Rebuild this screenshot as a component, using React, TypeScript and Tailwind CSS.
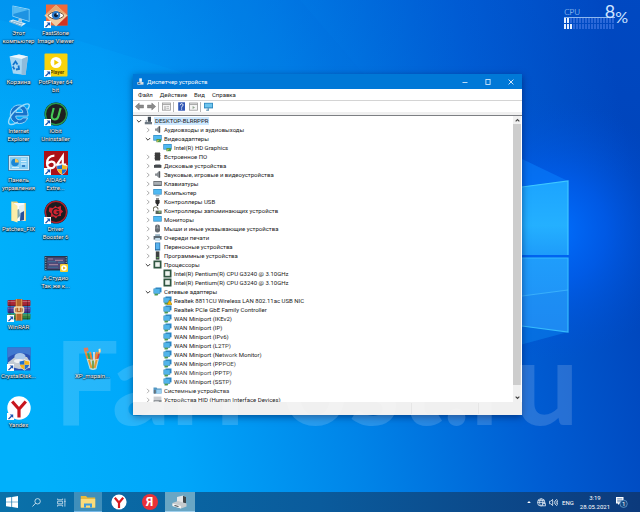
import type { ReactNode } from 'react';

const UI_FONT = "font-['Roboto','Noto_Sans',sans-serif]";

/* ---------- Wallpaper ---------- */

function Wallpaper() {
  return (
    <svg className="absolute inset-0 h-full w-full" viewBox="0 0 640 512" preserveAspectRatio="none" aria-hidden="true">
      <defs>
        <linearGradient id="sky" x1="0" y1="0.55" x2="1" y2="0.4">
          <stop offset="0" stopColor="#00b0fb" />
          <stop offset="0.22" stopColor="#00a6fa" />
          <stop offset="0.5" stopColor="#0084e8" />
          <stop offset="0.78" stopColor="#005cd2" />
          <stop offset="1" stopColor="#0044bb" />
        </linearGradient>
        <linearGradient id="topShade" x1="0" y1="0" x2="0" y2="1">
          <stop offset="0" stopColor="#0058d8" stopOpacity="0.22" />
          <stop offset="0.35" stopColor="#0058d8" stopOpacity="0" />
        </linearGradient>
        <radialGradient id="glow" cx="555" cy="230" r="130" gradientUnits="userSpaceOnUse">
          <stop offset="0" stopColor="#0070ff" stopOpacity="0.95" />
          <stop offset="0.4" stopColor="#0062fa" stopOpacity="0.6" />
          <stop offset="1" stopColor="#0050d8" stopOpacity="0" />
        </radialGradient>
        <linearGradient id="paneTop" x1="0" y1="0" x2="0" y2="1">
          <stop offset="0" stopColor="#1ca4ff" />
          <stop offset="0.6" stopColor="#24b0ff" />
          <stop offset="1" stopColor="#1e9cfa" />
        </linearGradient>
        <linearGradient id="paneBottom" x1="0" y1="0" x2="0" y2="1">
          <stop offset="0" stopColor="#1f9dfb" />
          <stop offset="1" stopColor="#208ef4" />
        </linearGradient>
      </defs>
      <rect width="640" height="512" fill="url(#sky)" />
      <rect width="640" height="512" fill="url(#topShade)" />
      <path d="M70 38 L200 78 L420 140 L300 0 L0 0 L0 20 Z" fill="#0068d8" opacity="0.08" />
      <rect width="640" height="512" fill="url(#glow)" />
      <path d="M520 158 L568 181 L520 188 Z" fill="#0a84ff" opacity="0.5" />
      <path d="M520 345 L568 332 L520 326 Z" fill="#0a84ee" opacity="0.5" />
      <path d="M400 202 L568 181 V255 H400 Z" fill="url(#paneTop)" />
      <path d="M400 258 H568 V332 L400 311 Z" fill="url(#paneBottom)" />
      <path d="M400 311 L568 290 V332 Z" fill="#1a86f0" opacity="0.5" />
      <path d="M522 187 L568 181 V255" fill="none" stroke="#3fc8ff" strokeWidth="1.2" />
      <path d="M522 258 H568 V332 L522 326" fill="none" stroke="#36bbfc" strokeWidth="1.2" />
      <path d="M522 296 L568 290" stroke="#4cc4ff" strokeWidth="0.6" />
    </svg>
  );
}

/* ---------- Desktop icons ---------- */

function Shortcut() {
  return (
    <g>
      <rect x="0" y="17" width="7" height="7" fill="#fff" />
      <path d="M1 22.8 L4 19.8 L2.6 18.4 H6.2 V22 L4.9 20.7 L2 23.6 Z" fill="#1b56b0" />
    </g>
  );
}

function Shield({ x, y }: { x: number; y: number }) {
  return (
    <g transform={`translate(${x} ${y})`}>
      <path d="M5.5 0 C7 1.2 9 1.7 11 1.6 C11.2 6 9.5 9.5 5.5 11.5 C1.5 9.5 -0.2 6 0 1.6 C2 1.7 4 1.2 5.5 0 Z" fill="#e9e9e9" />
      <path d="M5.5 1 V5.8 H0.8 C0.6 4.5 0.6 3.4 0.7 2.4 C2.5 2.4 4 2 5.5 1 Z M5.5 5.8 H10.2 C9.6 8 8 9.7 5.5 10.8 Z" fill="#1f6fd0" />
      <path d="M5.5 1 C7 2 8.5 2.4 10.3 2.4 C10.4 3.4 10.4 4.5 10.2 5.8 H5.5 Z M5.5 5.8 V10.8 C3 9.7 1.4 8 0.8 5.8 Z" fill="#f5b51c" />
    </g>
  );
}

const desktopArt: Record<string, ReactNode> = {
  pc: (
    <>
      <path d="M5.5 1.5 L22.5 5 V18 L5.5 12.6 Z" fill="#9fdcfa" />
      <path d="M6.2 2.4 L21.8 5.8 V17 L6.2 12 Z" fill="#1e93e2" />
      <path d="M6.2 2.4 L21.8 5.8 L6.2 10 Z" fill="#54baf3" />
      <path d="M12 14.4 L15 15.3 V18 L11 16.8 Z" fill="#a9c8dc" />
      <path d="M2 17 L6 15.5 L19 19.5 L15 22 Z" fill="#dff0fa" />
      <path d="M2 17 L15 22 V23 L2 18.1 Z" fill="#8db7d0" />
      <path d="M4.5 17.2 L6.5 16.4 L16 19.4 L14.5 20.7 Z" fill="#8fbcd8" />
    </>
  ),
  bin: (
    <>
      <path d="M2.5 3.5 L12 1.5 L21 3.5 L18.5 22 L6 20.5 Z" fill="#b9dcf2" opacity="0.9" />
      <path d="M2.5 3.5 L12 1.5 L21 3.5 L15 6 Z" fill="#eef7fd" />
      <path d="M15 6 L21 3.5 L18.5 22 L14.5 22 Z" fill="#8fbbda" />
      <path d="M6 12 L8.5 8.5 L10.5 11.5 M11.5 12.5 L12 16 L9 16.5 M7.5 16.4 L5.8 13.5" stroke="#1475cc" strokeWidth="1.8" fill="none" />
    </>
  ),
  ie: (
    <>
      <path d="M12.2 3 C17.8 3 21.1 7.2 21 14 H8.7 C8.9 16.3 10.2 17.8 12.4 17.8 C14 17.8 15.1 17 15.7 15.9 H20.6 C19.4 19.6 16.2 21.6 12.4 21.6 C6.8 21.6 3.3 17.8 3.3 12.3 C3.3 6.9 7 3 12.2 3 Z M8.8 10.5 H15.8 C15.6 8.2 14.4 6.8 12.3 6.8 C10.3 6.8 9 8.2 8.8 10.5 Z" fill="#1673cc" stroke="#b8e6fc" strokeWidth="0.8" />
      <path d="M20.5 7.5 C23.8 2.5 22.5 0.5 16.5 3 C9 6.4 2.5 14 1.6 19.5 C1.2 23.6 5.6 23.4 11 20" fill="none" stroke="#9adcfa" strokeWidth="1.4" />
    </>
  ),
  control: (
    <>
      <rect x="1.5" y="4.5" width="21" height="15" fill="#cdeafa" stroke="#2f6f9c" strokeWidth="0.8" />
      <rect x="3" y="6" width="18" height="12" fill="#84cdf4" />
      <circle cx="8" cy="11.5" r="3.8" fill="#1a87d6" />
      <path d="M8 11.5 V7.7 A3.8 3.8 0 0 1 11.8 11.5 Z" fill="#f3c55a" />
      <path d="M14 8 H19.5 M14 10.5 H19.5 M14 13 H19.5 M5 16.6 H12" stroke="#e4f5fd" strokeWidth="0.9" />
      <path d="M15 15 H18" stroke="#1565b5" strokeWidth="1.5" />
    </>
  ),
  folder: (
    <>
      <path d="M4.5 1.5 H10 L11.5 3 H19 V21 H4.5 Z" fill="#e6cf77" />
      <path d="M7 3 H17.5 V21 H7 Z" fill="#f8fbff" />
      <path d="M12 6 L17 4.5 V21 H12 Z" fill="#dff0f6" />
      <path d="M13.5 13 L17 11 V20 L13 21 Z" fill="#234f9c" />
      <path d="M9.5 10 L12 9 L13 16 L10 19 Z" fill="#7fa6ae" />
      <path d="M4.5 1.5 L10.5 6 V22.5 L4.5 20.5 Z" fill="#fbeda8" />
    </>
  ),
  winrar: (
    <>
      <rect x="0.5" y="2" width="23" height="6.2" rx="1" fill="#a8283a" />
      <rect x="0.5" y="8.7" width="23" height="6.2" rx="1" fill="#4f3c98" />
      <rect x="0.5" y="15.4" width="23" height="6.2" rx="1" fill="#2f8444" />
      <path d="M1 3.5 H23 M1 10.2 H23 M1 17 H23" stroke="#fff" strokeOpacity="0.35" strokeWidth="0.8" />
      <path d="M1 7.4 H23 M1 14.2 H23 M1 20.8 H23" stroke="#000" strokeOpacity="0.3" strokeWidth="1" />
      <path d="M3 2 V21.6 M20.5 2 V21.6" stroke="#000" strokeOpacity="0.25" strokeWidth="1" />
      <rect x="8.5" y="1" width="7" height="21.6" fill="#b5642a" />
      <path d="M9.5 1 V22.6 M14.5 1 V22.6" stroke="#e8a55b" strokeWidth="0.7" />
      <rect x="7.5" y="9" width="9" height="6" rx="2" fill="none" stroke="#f0dcae" strokeWidth="1.6" />
      <path d="M12 9 V13" stroke="#f0dcae" strokeWidth="1.4" />
      <Shortcut />
    </>
  ),
  crystal: (
    <>
      <rect x="0.5" y="0.5" width="23" height="23" fill="#2a52b4" />
      <path d="M0.5 0.5 H23.5 V9 C16 4 8 6 0.5 11 Z" fill="#3f78d0" />
      <path d="M1 15.5 L8 10 L20 10 L23 15 V21 L12 22 L1 19 Z" fill="#c3ccd4" />
      <ellipse cx="13" cy="9.5" rx="5.5" ry="3.4" fill="#a9c7ea" />
      <ellipse cx="12" cy="14" rx="5" ry="2" fill="#eef2f5" />
      <Shield x={12} y={12} />
      <Shortcut />
    </>
  ),
  yandex: (
    <>
      <circle cx="12" cy="12" r="11.7" fill="#fff" />
      <path d="M5.2 5.5 L12 13.2 L18.8 5.5 M12 12.5 V21.5" stroke="#c8161d" strokeWidth="3.2" fill="none" />
      <Shortcut />
    </>
  ),
  faststone: (
    <>
      <rect x="2" y="0.5" width="21.5" height="21" fill="#ef6a3a" />
      <path d="M12.5 12 H23.5 V21.5 H12.5 Z" fill="#d33321" />
      <path d="M0.5 11.5 L12 1 L23.5 11.5 L12 22.5 Z" fill="#f3cda2" />
      <path d="M0.5 11.5 L12 1 L23.5 11.5 L12 6 Z" fill="#e7a873" />
      <path d="M4 11.5 C7.5 6.8 16.5 6.8 20 11.5 C16.5 16.2 7.5 16.2 4 11.5 Z" fill="#fff" stroke="#5c3924" strokeWidth="0.9" />
      <circle cx="12" cy="11.2" r="4.2" fill="#2c7ac8" />
      <circle cx="12" cy="11.2" r="2" fill="#0b1c33" />
      <circle cx="13.4" cy="9.9" r="0.9" fill="#fff" />
      <Shortcut />
    </>
  ),
  potplayer: (
    <>
      <rect x="0.5" y="0.5" width="23" height="23" rx="1" fill="#f8d30c" />
      <circle cx="12" cy="9.5" r="5.5" fill="#fff" />
      <path d="M10.3 6.8 L14.8 9.5 L10.3 12.2 Z" fill="#f2c800" />
      <text x="6" y="21" fontSize="5" fontWeight="700" fill="#5a4700">Player</text>
      <Shortcut />
    </>
  ),
  iobit: (
    <>
      <circle cx="12" cy="12" r="11.5" fill="#1f2022" />
      <circle cx="12" cy="12" r="10.6" fill="none" stroke="#279a4c" strokeWidth="1.4" />
      <path d="M9.7 6 L7.8 13.6 C7.1 18.6 13.2 18.9 14.4 14.3 L16.6 6" fill="none" stroke="#46c856" strokeWidth="2.1" />
      <Shortcut />
    </>
  ),
  aida: (
    <>
      <rect x="0" y="0" width="24" height="24" fill="#ac1218" />
      <path d="M10.4 4.6 C5.5 4.6 3 8 3 12.2 C3 18.5 10.8 18.3 10.8 13.8 C10.8 10 5.5 9.6 3.6 13" fill="none" stroke="#fff" strokeWidth="2.2" />
      <path d="M18.8 18 V5 L13 13.6 H22.2" fill="none" stroke="#fff" strokeWidth="2.2" />
      <Shield x={12.5} y={12.5} />
      <Shortcut />
    </>
  ),
  booster: (
    <>
      <circle cx="12" cy="12" r="11.5" fill="#1c1c20" />
      <circle cx="12" cy="12" r="10.6" fill="none" stroke="#b0202c" strokeWidth="1.3" />
      <path d="M5.4 7.6 L9 8 L11.5 5.8 L13 7.5 L17 5.8 L17 9.4 L19.2 11.5 L17 13.5 L17 16 L13.7 16.2 L12 18.4 L9.7 16.6 L6.6 17 L7.2 13.5 L4.8 11.2 Z" fill="#cf2431" />
      <path d="M14.6 9.8 A3.3 3.3 0 1 0 15 13.2 M12.5 12 H15.3" fill="none" stroke="#1c1c20" strokeWidth="1.3" />
      <Shortcut />
    </>
  ),
  video: (
    <>
      <rect x="0.5" y="7" width="23" height="14.5" fill="#27344c" />
      <rect x="3.2" y="8.4" width="17.6" height="11.6" fill="#4d4a78" />
      <path d="M4 10 H9 M11 11.4 H19 M5 15.6 H14" stroke="#9c7f9b" strokeWidth="1.1" />
      <path d="M3.5 12.8 H12 M14 13.4 H20 M4 18.2 H14" stroke="#3b6f96" strokeWidth="1.1" />
      <path d="M1.8 8 V21 M22.2 8 V15" stroke="#9db6c8" strokeWidth="1" strokeDasharray="1.2 1.2" />
      <rect x="16" y="15" width="8" height="8" rx="1" fill="#f6cf31" />
      <circle cx="20" cy="19" r="2.8" fill="#fff" />
      <path d="M19.2 17.5 L21.6 19 L19.2 20.5 Z" fill="#dba800" />
    </>
  ),
  paint: (
    <>
      <path d="M7 13 L4 3 M11 14 L9 5 M13 14 L16 5 M15 14 L19 3" stroke="#e98430" strokeWidth="2" />
      <path d="M9 14 L7 6" stroke="#39a64b" strokeWidth="1.8" />
      <path d="M13 15 L13 5" stroke="#d9d9e4" strokeWidth="1.8" />
      <path d="M16 14 L18 7" stroke="#d73d3d" strokeWidth="1.6" />
      <path d="M2.5 1 L7 0.6 L7.6 4 L3.8 4.8 Z" fill="#e0663a" />
      <path d="M17.5 2 L19.5 1.5 L19.5 5.5 L18 5.5 Z" fill="#f5e4a7" />
      <path d="M5.5 11.5 C9 13 14 13 18 11.5 L15.5 22 C13.5 23.4 10.5 23.4 8.6 22 Z" fill="#dfe5d8" opacity="0.85" />
      <path d="M8 13 L10.5 21 M15.6 13 L13.6 21" stroke="#e49c32" strokeWidth="2" />
      <path d="M12 13.5 V21.5" stroke="#6b9d48" strokeWidth="1.8" />
    </>
  ),
};

type DesktopItem = { art: string; lines: string[]; place: string };

const desktopItems: DesktopItem[] = [
  { art: 'pc', lines: ['Этот', 'компьютер'], place: 'col-start-1 row-start-1' },
  { art: 'bin', lines: ['Корзина'], place: 'col-start-1 row-start-2' },
  { art: 'ie', lines: ['Internet', 'Explorer'], place: 'col-start-1 row-start-3' },
  { art: 'control', lines: ['Панель', 'управления'], place: 'col-start-1 row-start-4' },
  { art: 'folder', lines: ['Patches_FIX'], place: 'col-start-1 row-start-5' },
  { art: 'winrar', lines: ['WinRAR'], place: 'col-start-1 row-start-7' },
  { art: 'crystal', lines: ['CrystalDisk...'], place: 'col-start-1 row-start-8' },
  { art: 'yandex', lines: ['Yandex'], place: 'col-start-1 row-start-9' },
  { art: 'faststone', lines: ['FastStone', 'Image Viewer'], place: 'col-start-2 row-start-1' },
  { art: 'potplayer', lines: ['PotPlayer 64', 'bit'], place: 'col-start-2 row-start-2' },
  { art: 'iobit', lines: ['IObit', 'Uninstaller'], place: 'col-start-2 row-start-3' },
  { art: 'aida', lines: ['AIDA64', 'Extre...'], place: 'col-start-2 row-start-4' },
  { art: 'booster', lines: ['Driver', 'Booster 6'], place: 'col-start-2 row-start-5' },
  { art: 'video', lines: ['А-Студио', 'Так же к...'], place: 'col-start-2 row-start-6' },
  { art: 'paint', lines: ['XP_mspain...'], place: 'col-start-3 row-start-8' },
];

function DesktopIcons() {
  return (
    <div className="grid grid-cols-[repeat(3,37px)] grid-rows-[repeat(9,49px)]">
      {desktopItems.map((item) => (
        <button key={item.art} type="button" className={`flex flex-col items-center pt-1 ${item.place}`}>
          <svg className="size-6 shrink-0" viewBox="0 0 24 24" aria-hidden="true">
            {desktopArt[item.art]}
          </svg>
          <span className="mt-px flex flex-col text-[6px] leading-[8px] whitespace-nowrap text-white [text-shadow:0_1px_1px_#000,0_0_1px_#00203f,0_0_2px_#00203f]">
            {item.lines.map((line) => (
              <span key={line}>{line}</span>
            ))}
          </span>
        </button>
      ))}
    </div>
  );
}

/* ---------- CPU gadget ---------- */

function CpuMeter({ active }: { active: number }) {
  return (
    <div className="flex h-[5px] gap-px">
      {Array.from({ length: 17 }, (_, i) => (
        <span key={i} className={i < active ? 'w-0.5 bg-[#e4efff]' : 'w-0.5 bg-[#2b68d8]'} />
      ))}
    </div>
  );
}

function CpuGadget() {
  return (
    <div className="absolute top-0 right-3 flex font-['Lato',sans-serif] text-[#cfe4ff]">
      <div className="w-[51px]">
        <div className="flex h-[18px] items-end justify-between border-b border-[#8fb8ee]">
          <span className="text-[8px] leading-[9px] font-light">CPU</span>
          <span className="text-[18px] leading-[12px]">8</span>
        </div>
        <div className="flex flex-col gap-px">
          <CpuMeter active={2} />
          <CpuMeter active={3} />
        </div>
      </div>
      <span className="mt-2 text-[16px] leading-[18px]">%</span>
    </div>
  );
}

/* ---------- Device tree ---------- */

const Warning = () => <path d="M6.5 4 L9.2 8.7 H3.8 Z" fill="#f5b800" stroke="#7a5a00" strokeWidth="0.4" />;

const Speaker = () => (
  <>
    <path d="M2 3.5 H3.6 L6 1 V8 L3.6 5.7 H2 Z" fill="#8a8f94" />
    <path d="M6 1 V8 L7.2 7.5 V1.6 Z" fill="#55595d" />
  </>
);

const Chip = () => (
  <>
    <rect x="0.5" y="0.5" width="8" height="8" fill="#2f5540" />
    <rect x="2.2" y="2.2" width="4.6" height="4.6" fill="#eef3ee" />
  </>
);

const Network = () => (
  <>
    <rect x="2.5" y="0.5" width="6" height="4.8" fill="#2a86c8" />
    <rect x="0.8" y="1.8" width="6.2" height="4.8" fill="#52b5ea" stroke="#2f7fae" strokeWidth="0.5" />
    <path d="M1.5 6.8 H5.5 L4.5 8.6 H1.5 Z" fill="#4e9b52" />
  </>
);

const Screen = () => (
  <>
    <rect x="0.3" y="1" width="8.4" height="5.6" fill="#2d86bd" />
    <rect x="1" y="1.6" width="7" height="4.3" fill="#4fb9f2" />
  </>
);

const deviceArt: Record<string, ReactNode> = {
  root: (
    <>
      <rect x="3.8" y="0.8" width="3.2" height="5" fill="#3c4650" />
      <path d="M0.8 6 H8 V8.3 H0.8 Z" fill="#6b7680" />
      <path d="M1.5 4 H3 V6 H1.5 Z" fill="#9aa6b0" />
    </>
  ),
  speaker: <Speaker />,
  display: (
    <>
      <Screen />
      <path d="M3.4 5 H8 V8.2 H3.4 Z" fill="#4c9a4a" />
      <path d="M4.4 8.2 V6.4 H6" stroke="#e8c75a" strokeWidth="0.7" fill="none" />
    </>
  ),
  firmware: (
    <>
      <rect x="2" y="0.5" width="5" height="8" fill="#3b3b3b" />
      <path d="M1.5 1.5 V8 M7.5 1.5 V8" stroke="#777" strokeWidth="0.8" strokeDasharray="0.8 0.8" />
    </>
  ),
  disk: (
    <>
      <rect x="1" y="4" width="7.4" height="2.8" fill="#45494d" />
      <path d="M1.6 4 L2.6 3 H7 L8 4 Z" fill="#a2a6aa" />
    </>
  ),
  keyboard: (
    <>
      <rect x="0.4" y="2" width="8.4" height="5" fill="#62676c" />
      <rect x="1.1" y="2.8" width="7" height="3" fill="#a9aeb3" />
    </>
  ),
  computer: (
    <>
      <Screen />
      <path d="M2.5 7.8 H6.5" stroke="#67808f" strokeWidth="0.9" />
    </>
  ),
  usb: (
    <>
      <path d="M3 1 H6 V3 H3 Z" fill="#8b8b8b" />
      <path d="M2.4 3 H6.6 V6 L5.2 7.4 V9 H3.8 V7.4 L2.4 6 Z" fill="#2b2b2b" />
    </>
  ),
  storage: (
    <>
      <path d="M1 5 A2.4 2.4 0 1 1 5 3.5" fill="none" stroke="#6c6c5c" strokeWidth="1.1" />
      <rect x="2.6" y="4.6" width="6" height="3.4" fill="#58655a" />
      <rect x="5.6" y="5.2" width="2" height="1.4" fill="#8fc878" />
    </>
  ),
  monitor: <Screen />,
  mouse: (
    <>
      <rect x="2" y="0.4" width="5" height="8.2" rx="2.4" fill="#666c72" />
      <path d="M4.5 0.8 V4 M2.2 4 H6.8" stroke="#b5babf" strokeWidth="0.6" />
    </>
  ),
  printer: (
    <>
      <rect x="2.2" y="1.2" width="4.8" height="2" fill="#9ab4c4" />
      <rect x="0.6" y="3" width="8" height="3.6" fill="#5c6a74" />
      <rect x="2.2" y="5" width="4.8" height="3" fill="#c8e0ee" />
    </>
  ),
  portable: (
    <>
      <rect x="2" y="0.5" width="5.2" height="8" fill="#2a6ea6" />
      <rect x="2.7" y="1.2" width="3.8" height="6" fill="#58b2ee" />
    </>
  ),
  software: (
    <>
      <rect x="2.8" y="0.4" width="3.6" height="8.2" fill="#3d4142" />
      <rect x="3.6" y="6" width="2" height="1.2" fill="#69b35e" />
    </>
  ),
  chip: <Chip />,
  network: <Network />,
  networkWarning: (
    <>
      <Network />
      <Warning />
    </>
  ),
  system: (
    <>
      <path d="M0.5 1.5 H3.5 L4.3 2.5 H8.6 V7.6 H0.5 Z" fill="#3484b8" />
      <rect x="3.4" y="3.6" width="5" height="3.8" fill="#8cc9ef" />
      <rect x="0.9" y="4" width="1.8" height="3.6" fill="#4c5a64" />
    </>
  ),
  hid: (
    <>
      <rect x="0.6" y="1.6" width="7.8" height="3.4" fill="#c2c6ca" />
      <path d="M0.6 5 H8.6 V8 H0.6 Z" fill="#7b8085" />
      <path d="M1.4 6.4 H5.8" stroke="#e2e4e6" strokeWidth="0.8" />
    </>
  ),
};

type Device = { label: string; icon: string; open?: boolean; children?: { label: string; icon: string }[] };

const devices: Device[] = [
  { label: 'Аудиовходы и аудиовыходы', icon: 'speaker' },
  { label: 'Видеоадаптеры', icon: 'display', open: true, children: [{ label: 'Intel(R) HD Graphics', icon: 'display' }] },
  { label: 'Встроенное ПО', icon: 'firmware' },
  { label: 'Дисковые устройства', icon: 'disk' },
  { label: 'Звуковые, игровые и видеоустройства', icon: 'speaker' },
  { label: 'Клавиатуры', icon: 'keyboard' },
  { label: 'Компьютер', icon: 'computer' },
  { label: 'Контроллеры USB', icon: 'usb' },
  { label: 'Контроллеры запоминающих устройств', icon: 'storage' },
  { label: 'Мониторы', icon: 'monitor' },
  { label: 'Мыши и иные указывающие устройства', icon: 'mouse' },
  { label: 'Очереди печати', icon: 'printer' },
  { label: 'Переносные устройства', icon: 'portable' },
  { label: 'Программные устройства', icon: 'software' },
  {
    label: 'Процессоры',
    icon: 'chip',
    open: true,
    children: [
      { label: 'Intel(R) Pentium(R) CPU G3240 @ 3.10GHz', icon: 'chip' },
      { label: 'Intel(R) Pentium(R) CPU G3240 @ 3.10GHz', icon: 'chip' },
    ],
  },
  {
    label: 'Сетевые адаптеры',
    icon: 'network',
    open: true,
    children: [
      { label: 'Realtek 8811CU Wireless LAN 802.11ac USB NIC', icon: 'networkWarning' },
      { label: 'Realtek PCIe GbE Family Controller', icon: 'network' },
      { label: 'WAN Miniport (IKEv2)', icon: 'network' },
      { label: 'WAN Miniport (IP)', icon: 'network' },
      { label: 'WAN Miniport (IPv6)', icon: 'network' },
      { label: 'WAN Miniport (L2TP)', icon: 'network' },
      { label: 'WAN Miniport (Network Monitor)', icon: 'network' },
      { label: 'WAN Miniport (PPPOE)', icon: 'network' },
      { label: 'WAN Miniport (PPTP)', icon: 'network' },
      { label: 'WAN Miniport (SSTP)', icon: 'network' },
    ],
  },
  { label: 'Системные устройства', icon: 'system' },
  { label: 'Устройства HID (Human Interface Devices)', icon: 'hid' },
];

function Expander({ open }: { open?: boolean }) {
  return (
    <button type="button" aria-label={open ? 'Свернуть' : 'Развернуть'} className="flex w-1.5 justify-center">
      <svg className="size-1.5" viewBox="0 0 6 6" fill="none" aria-hidden="true">
        {open ? (
          <path d="M0.8 2 L3 4.2 L5.2 2" stroke="#404040" strokeWidth="1" />
        ) : (
          <path d="M2 0.8 L4.2 3 L2 5.2" stroke="#a0a0a0" strokeWidth="0.9" />
        )}
      </svg>
    </button>
  );
}

function Row({ label, icon, expander, selected }: { label: string; icon: string; expander?: ReactNode; selected?: boolean }) {
  return (
    <div className="flex h-[9px] items-center">
      <span className="flex w-2">{expander}</span>
      <svg className="mr-px size-[9px] shrink-0" viewBox="0 0 9 9" aria-hidden="true">
        {deviceArt[icon]}
      </svg>
      <span className={`px-px leading-[8px] whitespace-nowrap ${selected ? 'bg-[#cce8ff]' : ''}`}>{label}</span>
    </div>
  );
}

function DeviceTree() {
  return (
    <ul role="tree" className="min-w-0 flex-1 overflow-hidden pl-[3px]">
      <li role="treeitem" aria-selected="true">
        <Row label="DESKTOP-BLRRPPR" icon="root" expander={<Expander open />} selected />
        <ul role="group" className="pl-[9px]">
          {devices.map((device) => (
            <li key={device.label} role="treeitem" aria-selected="false">
              <Row label={device.label} icon={device.icon} expander={<Expander open={device.open} />} />
              {device.children && (
                <ul role="group" className="pl-[10px]">
                  {device.children.map((child, i) => (
                    <li key={i} role="treeitem" aria-selected="false">
                      <Row label={child.label} icon={child.icon} />
                    </li>
                  ))}
                </ul>
              )}
            </li>
          ))}
        </ul>
      </li>
    </ul>
  );
}

/* ---------- Device manager window ---------- */

function TitleBar() {
  return (
    <header className="flex h-[15px] items-center bg-[#0078d7] pl-1 text-white">
      <svg className="mr-[3px] size-[7px]" viewBox="0 0 8 8" aria-hidden="true">
        <rect x="2.6" y="0.4" width="3" height="4" fill="#e8f0f6" />
        <rect x="0.4" y="4.6" width="7" height="3" fill="#d3dde4" />
        <rect x="1.2" y="5.4" width="2.6" height="1.2" fill="#34516b" />
      </svg>
      <h1 className="flex-1 leading-[8px]">Диспетчер устройств</h1>
      <button type="button" aria-label="Свернуть" className="flex h-full w-[23px] items-center justify-center">
        <svg className="size-1.5" viewBox="0 0 6 6"><path d="M0.5 3.5 H5.5" stroke="#cfe6fa" strokeWidth="0.9" /></svg>
      </button>
      <button type="button" aria-label="Развернуть" className="flex h-full w-[23px] items-center justify-center">
        <svg className="size-1.5" viewBox="0 0 6 6"><rect x="0.9" y="0.5" width="4.2" height="5" fill="none" stroke="#cfe6fa" strokeWidth="0.9" /></svg>
      </button>
      <button type="button" aria-label="Закрыть" className="flex h-full w-[23px] items-center justify-center">
        <svg className="size-1.5" viewBox="0 0 6 6"><path d="M0.6 0.6 L5.4 5.4 M5.4 0.6 L0.6 5.4" stroke="#e4f1fc" strokeWidth="0.9" /></svg>
      </button>
    </header>
  );
}

function MenuBar() {
  return (
    <nav className="flex h-3 items-center gap-[7px] border-b border-[#d4d4d4] bg-white pl-[5px]">
      {['Файл', 'Действие', 'Вид', 'Справка'].map((item) => (
        <button key={item} type="button" className="leading-[8px]">{item}</button>
      ))}
    </nav>
  );
}

function ToolButton({ label, children }: { label: string; children: ReactNode }) {
  return (
    <button type="button" aria-label={label} className="flex w-[10px] justify-center">
      <svg className="size-[9px]" viewBox="0 0 9 9" aria-hidden="true">{children}</svg>
    </button>
  );
}

function ToolBar() {
  const divider = <span className="h-2.5 w-px bg-[#b8b8b8]" />;
  return (
    <div className="flex h-[11px] items-center gap-0.5 bg-white pl-px">
      <ToolButton label="Назад">
        <path d="M0.3 4.5 L4.2 1 V3 H8.6 V6 H4.2 V8 Z" fill="#8b8b8b" stroke="#666" strokeWidth="0.4" />
      </ToolButton>
      <ToolButton label="Вперёд">
        <path d="M8.7 4.5 L4.8 1 V3 H0.4 V6 H4.8 V8 Z" fill="#8b8b8b" stroke="#666" strokeWidth="0.4" />
      </ToolButton>
      {divider}
      <ToolButton label="Показать дерево консоли">
        <rect x="0.5" y="1" width="8" height="7.2" fill="#f4f4f4" stroke="#9a9a9a" strokeWidth="0.8" />
        <path d="M0.5 2.4 H8.5 M3 4 V8" stroke="#9a9a9a" strokeWidth="0.9" />
        <path d="M4.4 4.6 H7 M4.4 6.4 H7" stroke="#b0b0b0" strokeWidth="0.8" />
      </ToolButton>
      {divider}
      <ToolButton label="Справка">
        <rect x="1.2" y="0.3" width="6.8" height="8.4" fill="#2f55b4" />
        <path d="M3.2 3.2 C3.2 1.2 6.2 1.2 6 3.2 C5.9 4.2 4.6 4.2 4.6 5.6 M4.6 6.5 V7.6" fill="none" stroke="#fff" strokeWidth="1" />
      </ToolButton>
      <ToolButton label="Свойства">
        <rect x="0.5" y="1" width="8" height="7.2" fill="#f4f4f4" stroke="#9a9a9a" strokeWidth="0.8" />
        <path d="M0.5 2.4 H8.5" stroke="#9a9a9a" strokeWidth="0.9" />
        <path d="M3.6 4 L6 5.4 L3.6 6.9 Z" fill="#8fa48f" />
      </ToolButton>
      {divider}
      <ToolButton label="Обновить конфигурацию оборудования">
        <rect x="0" y="0.8" width="9" height="5.6" fill="#2d86bd" />
        <rect x="0.8" y="1.6" width="7.4" height="3.8" fill="#6fc5ee" />
        <path d="M4.2 6 V8 M2.2 8.2 H5" stroke="#4d87a8" strokeWidth="1" />
      </ToolButton>
    </div>
  );
}

function ScrollBar() {
  return (
    <div className="flex w-2 flex-col bg-[#f0f0f0]">
      <button type="button" aria-label="Вверх" className="flex h-2 items-center justify-center">
        <svg className="size-[5px]" viewBox="0 0 6 6" fill="none"><path d="M0.8 4 L3 1.8 L5.2 4" stroke="#404040" strokeWidth="1.3" /></svg>
      </button>
      <div className="flex-1 bg-[#cdcdcd]" />
      <button type="button" aria-label="Вниз" className="flex h-[17px] items-end justify-center pb-0.5">
        <svg className="size-[5px]" viewBox="0 0 6 6" fill="none"><path d="M0.8 2 L3 4.2 L5.2 2" stroke="#404040" strokeWidth="1.3" /></svg>
      </button>
    </div>
  );
}

function DeviceManager() {
  return (
    <section className="absolute top-[74px] right-[118px] left-[133px] bg-[#f0f0f0] text-[6px] text-[#1a1a1a] shadow-[0_2px_7px_rgba(0,20,70,0.55)]">
      <TitleBar />
      <MenuBar />
      <ToolBar />
      <div className="mt-[3px] flex h-[287px] border-t border-[#7d7f83] bg-white pr-px">
        <DeviceTree />
        <ScrollBar />
      </div>
      <footer className="flex h-[13px] justify-end py-px pr-[43px]">
        <div className="w-[68px] border-x border-[#e2e2e2]" />
      </footer>
    </section>
  );
}

/* ---------- Taskbar ---------- */

function Tray() {
  return (
    <div className="ml-auto flex items-center text-[6px] leading-[9px] text-white">
      <button type="button" aria-label="Скрытые значки" className="mr-1.5">
        <svg className="size-1" viewBox="0 0 4 4"><path d="M0.2 3 L2 1 L3.8 3 Z" fill="#fff" /></svg>
      </button>
      <button type="button" aria-label="Сеть" className="mr-[3px]">
        <svg className="size-[9px]" viewBox="0 0 9 9" fill="none" stroke="#e4ecf5" strokeWidth="0.8">
          <circle cx="4.2" cy="4.4" r="3.7" />
          <path d="M0.5 4.4 H8 M4.2 0.7 C2 3 2 6 4.2 8 M4.2 0.7 C6.4 3 6.4 6 4.2 8 M1 2.6 H7.4" />
          <path d="M5.4 5.6 H8.6 V7.8 H5.4 Z" fill="#1b4f92" />
        </svg>
      </button>
      <button type="button" aria-label="Громкость" className="mr-1">
        <svg className="size-[9px]" viewBox="0 0 9 9" fill="none" stroke="#e4ecf5" strokeWidth="0.8">
          <path d="M0.5 3.2 H1.8 L3.6 1.4 V7.6 L1.8 5.8 H0.5 Z" />
          <path d="M5 3 C5.8 4 5.8 5 5 6 M6.2 2 C7.6 3.6 7.6 5.4 6.2 7 M7.4 1 C9.2 3.4 9.2 5.6 7.4 8" />
        </svg>
      </button>
      <button type="button" className="mr-1.5">ENG</button>
      <button type="button" className="mr-[5px] flex flex-col items-center">
        <span>3:19</span>
        <span>28.05.2021</span>
      </button>
      <button type="button" aria-label="Уведомления" className="mr-3">
        <svg className="h-3 w-[13px]" viewBox="0 0 13 12">
          <path d="M1 1 H8.5 V7.5 H4.5 L3 9 V7.5 H1 Z" fill="#fff" />
          <path d="M2.2 2.8 H7.3 M2.2 4.3 H7.3 M2.2 5.8 H5.4" stroke="#1d4f91" strokeWidth="0.6" />
          <circle cx="8.6" cy="7.8" r="3.7" fill="#174a83" stroke="#7fb6e6" strokeWidth="0.6" />
          <text x="7" y="10" fontSize="6" fill="#fff">1</text>
        </svg>
      </button>
    </div>
  );
}

function Taskbar() {
  return (
    <footer className="flex h-5 shrink-0 items-stretch bg-linear-to-r from-[#0a71a9] via-[#0a5b9c] to-[#0c3a7c]">
      <button type="button" aria-label="Пуск" className="flex w-6 items-center justify-center">
        <svg className="size-3" viewBox="0 0 12 12" fill="#fff">
          <path d="M0 1.8 L5.4 1 V5.7 H0 Z M6.1 0.9 L12 0 V5.7 H6.1 Z M0 6.3 H5.4 V11 L0 10.2 Z M6.1 6.3 H12 V12 L6.1 11.1 Z" />
        </svg>
      </button>
      <button type="button" aria-label="Поиск" className="flex w-6 items-center justify-center">
        <svg className="size-[9px]" viewBox="0 0 9 9" fill="none" stroke="#e6f1f8" strokeWidth="0.8">
          <circle cx="5.6" cy="3.3" r="2.7" />
          <path d="M3.6 5.2 L0.5 8.5" />
        </svg>
      </button>
      <button type="button" aria-label="Представление задач" className="flex w-[26px] items-center justify-center">
        <svg className="size-[9px]" viewBox="0 0 9 9" fill="none" stroke="#d5e6f1" strokeWidth="0.8">
          <path d="M0.6 0.6 V1.8 H5.6 V0.6 M0.6 8.6 V7.2 H5.6 V8.6 M0.6 3.2 H5.6 V5.8 H0.6 Z M7.9 0.6 V8.6 M7.2 3.4 H8.6" />
        </svg>
      </button>
      <button type="button" aria-label="Проводник" className="flex w-7 items-center justify-center border-b border-[#76b9e8] bg-[#3f8fbb]">
        <svg className="h-3.5 w-4" viewBox="0 0 16 14">
          <path d="M0.8 1 H6 L7.4 2.4 H15.2 V12.6 H0.8 Z" fill="#e9b93c" />
          <path d="M0.8 4 H15.2 V12.6 H0.8 Z" fill="#fbdc7b" />
          <path d="M4 12.6 V8.4 H12 V12.6 H10 V10.6 H6 V12.6 Z" fill="#3d9be0" />
        </svg>
      </button>
      <button type="button" aria-label="Яндекс Браузер" className="flex w-[34px] items-center justify-center">
        <svg className="size-4" viewBox="0 0 16 16">
          <circle cx="8" cy="8" r="7.6" fill="#fff" />
          <path d="M3.8 3.8 L8 8.8 L12.2 3.8 M8 8.4 V14" stroke="#d51b20" strokeWidth="2.2" fill="none" />
        </svg>
      </button>
      <button type="button" aria-label="Яндекс" className="flex w-[27px] items-center justify-center">
        <span className="flex size-4 items-center justify-center rounded-full bg-[#ea3238] text-[12px] leading-none font-bold text-white">Я</span>
      </button>
      <button type="button" aria-label="Диспетчер устройств" className="ml-0.5 flex w-[30px] items-center justify-center border-b border-[#9fd0ee] bg-[#69a6c4]">
        <svg className="h-3.5 w-4" viewBox="0 0 16 14">
          <path d="M5 2 L11 0.5 L14 2 V8 L8 9.5 L5 7.5 Z" fill="#e4e7e8" />
          <path d="M11 0.7 L14 2 V8 L11 8.6 Z" fill="#3e4448" />
          <path d="M0.5 8 L6 6 L14.5 8.5 V11.5 L9 13.5 L0.5 11 Z" fill="#c6cbce" />
          <path d="M0.5 8.6 L9 11 V13.5 L0.5 11 Z" fill="#f4f5f5" />
          <path d="M2.5 10 L6.5 11 V12 L2.5 11 Z" fill="#3c4246" />
        </svg>
      </button>
      <Tray />
    </footer>
  );
}

export default function App() {
  return (
    <div className={`relative flex min-h-screen w-full flex-col overflow-hidden bg-[#0080e6] ${UI_FONT}`}>
      <Wallpaper />
      <main className="relative flex-1">
        <DesktopIcons />
        <CpuGadget />
        <DeviceManager />
        {/* Site watermark lies over everything on the desktop */}
        <div className="pointer-events-none absolute top-[323px] left-[54px] font-['Lato',sans-serif] text-[116px] leading-[116px] font-bold whitespace-nowrap text-white/15">
          FarPost.ru
        </div>
      </main>
      <div className="relative">
        <Taskbar />
      </div>
    </div>
  );
}
